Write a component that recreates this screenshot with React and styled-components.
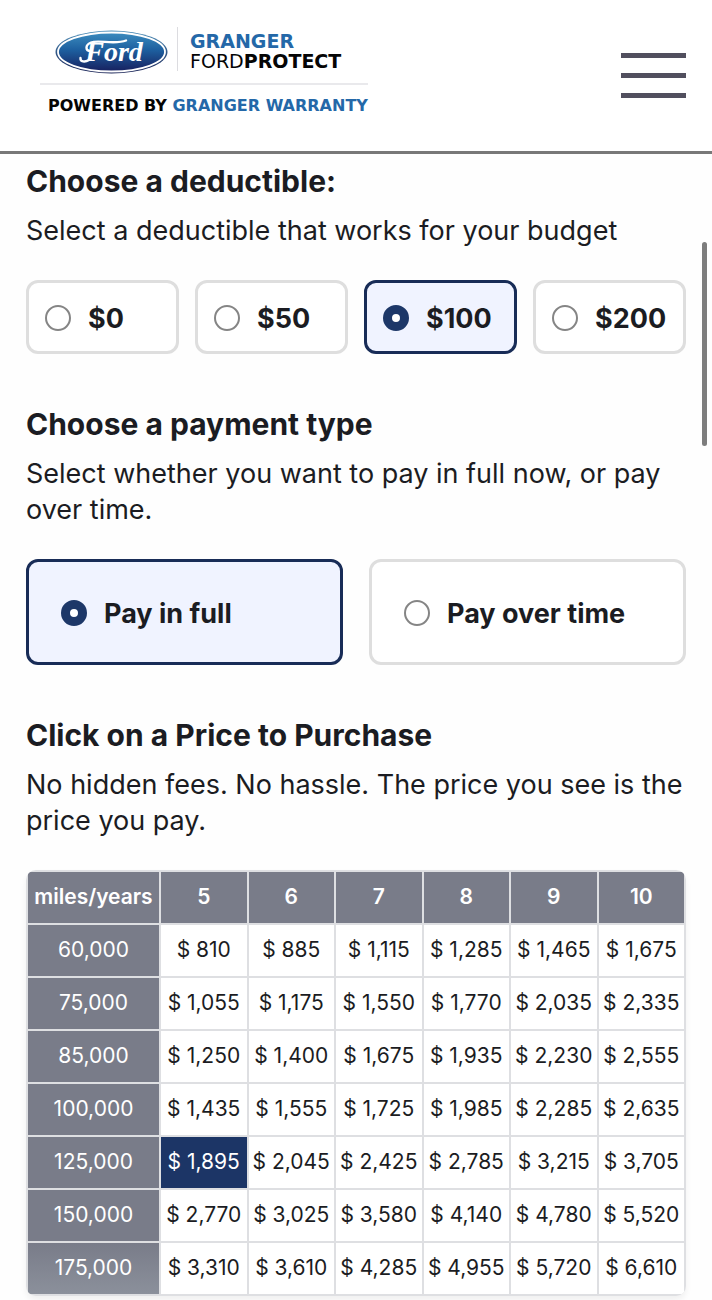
import { useState } from "react";
import styled, { createGlobalStyle } from "styled-components";

const GlobalStyle = createGlobalStyle`
  * {
    box-sizing: border-box;
  }
  body {
    margin: 0;
    background: #fefefe;
    color: #1b1c22;
    font-family: Inter, "Noto Sans", sans-serif;
  }
  button, input {
    font: inherit;
    margin: 0;
  }
`;

const Header = styled.header`
  display: flex;
  justify-content: space-between;
  align-items: flex-start;
  height: 154px;
  padding: 27px 26px 0 40px;
  border-bottom: 3px solid #787878;
  background: #ffffff;
`;
const Brand = styled.a`
  display: flex;
  flex-direction: column;
  color: #050505;
  font-family: "DejaVu Sans", sans-serif;
  text-decoration: none;
`;
const BrandTop = styled.div`
  display: flex;
  align-items: flex-start;
  height: 58px;
  padding-left: 15px;
  border-bottom: 2px solid #e9e9ec;
`;
const BrandNames = styled.div`
  display: flex;
  flex-direction: column;
  height: 44px;
  margin-left: 9px;
  padding: 4px 0 0 12px;
  border-left: 1px solid #dcdce0;
  font-size: 19px;
  line-height: 20px;
`;
const Blue = styled.strong`
  color: #2468a8;
`;
const Powered = styled.strong`
  padding: 12px 0 0 8px;
  font-size: 16px;
  line-height: 18px;
`;
const MenuButton = styled.button`
  display: flex;
  flex-direction: column;
  justify-content: space-between;
  width: 65px;
  height: 45px;
  margin-top: 26px;
  padding: 0;
  border: 0;
  background: none;
  cursor: pointer;
`;
const MenuBar = styled.span`
  width: 100%;
  height: 5px;
  background: #514f5e;
`;

const Main = styled.main`
  display: flex;
  flex-direction: column;
  gap: 52px;
  padding: 9px 26px 4px;
`;
const Section = styled.section`
  display: flex;
  flex-direction: column;
`;
const Title = styled.h2`
  margin: 0 0 14px;
  font-size: 30px;
  font-weight: 700;
  line-height: 36px;
`;
const Description = styled.p`
  margin: 0 0 31px;
  font-size: 27px;
  line-height: 36px;
`;
const Options = styled.div`
  display: grid;
  grid-template-columns: repeat(${(props) => props.$columns}, 1fr);
  gap: ${(props) => props.$gap};
`;
const Option = styled.label`
  display: flex;
  align-items: center;
  gap: 17px;
  height: ${(props) => (props.$large ? "106px" : "74px")};
  padding-top: 2px;
  padding-left: ${(props) => (props.$large ? "32px" : "16px")};
  border: 3px solid #dedede;
  border-radius: 12px;
  background: #ffffff;
  font-size: 27px;
  font-weight: 700;
  white-space: nowrap;
  cursor: pointer;

  &:has(input:checked) {
    border-color: #182c57;
    background: #f0f3ff;
  }
`;
const Radio = styled.input`
  flex: none;
  width: 26px;
  height: 26px;
  appearance: none;
  border: 2px solid #858585;
  border-radius: 50%;
  background: #ffffff;

  &:checked {
    border: 9px solid #1d3768;
  }
`;

const PriceTable = styled.table`
  width: 100%;
  table-layout: fixed;
  overflow: hidden;
  border-collapse: separate;
  border-spacing: 2px;
  border-radius: 10px;
  background: #dedfe2;
  box-shadow: 0 4px 6px rgba(0, 0, 0, 0.06);
  font-size: 21px;
`;
const HeadCell = styled.th`
  width: ${(props) => (props.$first ? "131px" : "auto")};
  height: 51px;
  padding: 0 0 2px;
  background: #797c89;
  color: #ffffff;
  font-weight: ${(props) => (props.scope === "col" ? 600 : 400)};

  tbody tr:last-child > & {
    background: linear-gradient(#797c89, #8b909b);
  }
`;
const Cell = styled.td`
  height: 51px;
  padding: 0;
  background: #ffffff;
`;
const PriceButton = styled.button`
  display: block;
  width: 100%;
  height: 51px;
  padding: 0 0 2px;
  border: 0;
  background: ${(props) => (props.$selected ? "#1c3566" : "#ffffff")};
  color: ${(props) => (props.$selected ? "#ffffff" : "#1b1c22")};
  white-space: nowrap;
  cursor: pointer;
`;
const ScrollThumb = styled.div`
  position: fixed;
  top: 242px;
  right: 5px;
  width: 5px;
  height: 204px;
  border-radius: 3px;
  background: #7d7d7d;
`;

const deductibles = ["$0", "$50", "$100", "$200"];
const payments = ["Pay in full", "Pay over time"];
const years = [5, 6, 7, 8, 9, 10];
const prices = [
  ["60,000", "810", "885", "1,115", "1,285", "1,465", "1,675"],
  ["75,000", "1,055", "1,175", "1,550", "1,770", "2,035", "2,335"],
  ["85,000", "1,250", "1,400", "1,675", "1,935", "2,230", "2,555"],
  ["100,000", "1,435", "1,555", "1,725", "1,985", "2,285", "2,635"],
  ["125,000", "1,895", "2,045", "2,425", "2,785", "3,215", "3,705"],
  ["150,000", "2,770", "3,025", "3,580", "4,140", "4,780", "5,520"],
  ["175,000", "3,310", "3,610", "4,285", "4,955", "5,720", "6,610"],
];

function FordLogo() {
  return (
    <svg width="113" height="48" viewBox="0 0 113 48" role="img" aria-label="Ford">
      <defs>
        <linearGradient id="oval" x1="0" y1="0" x2="0" y2="1">
          <stop offset="0" stopColor="#3b8cbf" />
          <stop offset="0.45" stopColor="#1d5f9f" />
          <stop offset="1" stopColor="#17205f" />
        </linearGradient>
        <linearGradient id="rim" x1="0" y1="0" x2="0" y2="1">
          <stop offset="0" stopColor="#4b8fba" />
          <stop offset="1" stopColor="#1b2457" />
        </linearGradient>
      </defs>
      <ellipse cx="56.5" cy="25" rx="56" ry="21.5" fill="url(#rim)" />
      <ellipse cx="56.5" cy="25" rx="53.5" ry="19.5" fill="url(#oval)" stroke="#ffffff" strokeWidth="1.8" />
      <path
        d="M36 24 C30 24 30 18 36 15.5 C43 12.5 60 18 71 13.5"
        fill="none"
        stroke="#ffffff"
        strokeWidth="2.4"
        strokeLinecap="round"
      />
      <path
        d="M34 33 C30 35.5 25 35 25.5 31"
        fill="none"
        stroke="#ffffff"
        strokeWidth="2.4"
        strokeLinecap="round"
      />
      <text
        x="59"
        y="34"
        textAnchor="middle"
        fill="#ffffff"
        fontFamily="Liberation Serif, serif"
        fontSize="28"
        fontStyle="italic"
        fontWeight="700"
      >
        Ford
      </text>
    </svg>
  );
}

function App() {
  const [deductible, setDeductible] = useState("$100");
  const [payment, setPayment] = useState("Pay in full");
  const [selected, setSelected] = useState("125,000-5");

  return (
    <>
      <GlobalStyle />
      <Header>
        <Brand href="#">
          <BrandTop>
            <FordLogo />
            <BrandNames>
              <Blue>GRANGER</Blue>
              <span>
                FORD<strong>PROTECT</strong>
              </span>
            </BrandNames>
          </BrandTop>
          <Powered>
            POWERED BY <Blue>GRANGER WARRANTY</Blue>
          </Powered>
        </Brand>
        <MenuButton aria-label="Menu">
          <MenuBar />
          <MenuBar />
          <MenuBar />
        </MenuButton>
      </Header>
      <Main>
        <Section>
          <Title>Choose a deductible:</Title>
          <Description>Select a deductible that works for your budget</Description>
          <Options $columns={4} $gap="16px">
            {deductibles.map((item) => (
              <Option key={item}>
                <Radio
                  type="radio"
                  name="deductible"
                  checked={deductible === item}
                  onChange={() => setDeductible(item)}
                />
                {item}
              </Option>
            ))}
          </Options>
        </Section>
        <Section>
          <Title>Choose a payment type</Title>
          <Description>
            Select whether you want to pay in full now, or pay over time.
          </Description>
          <Options $columns={2} $gap="26px">
            {payments.map((item) => (
              <Option key={item} $large>
                <Radio
                  type="radio"
                  name="payment"
                  checked={payment === item}
                  onChange={() => setPayment(item)}
                />
                {item}
              </Option>
            ))}
          </Options>
        </Section>
        <Section>
          <Title>Click on a Price to Purchase</Title>
          <Description>
            No hidden fees. No hassle. The price you see is the price you pay.
          </Description>
          <PriceTable>
            <thead>
              <tr>
                <HeadCell scope="col" $first>
                  miles/years
                </HeadCell>
                {years.map((year) => (
                  <HeadCell key={year} scope="col">
                    {year}
                  </HeadCell>
                ))}
              </tr>
            </thead>
            <tbody>
              {prices.map(([miles, ...row]) => (
                <tr key={miles}>
                  <HeadCell scope="row">{miles}</HeadCell>
                  {row.map((price, i) => {
                    const id = `${miles}-${years[i]}`;
                    return (
                      <Cell key={id}>
                        <PriceButton
                          $selected={selected === id}
                          onClick={() => setSelected(id)}
                        >
                          $ {price}
                        </PriceButton>
                      </Cell>
                    );
                  })}
                </tr>
              ))}
            </tbody>
          </PriceTable>
        </Section>
      </Main>
      <ScrollThumb />
    </>
  );
}

export default App;
